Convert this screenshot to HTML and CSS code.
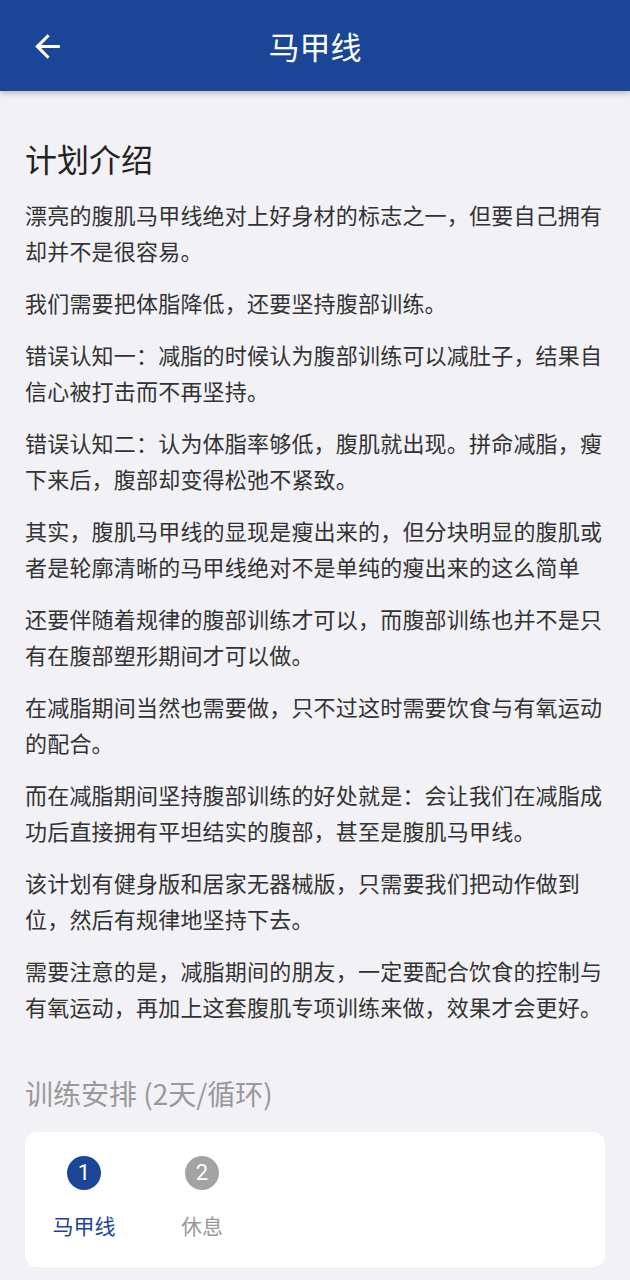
FILE: index.html
```html
<!DOCTYPE html>
<html lang="zh-CN">
<head>
<meta charset="utf-8">
<link rel="stylesheet" href="styles.css">
</head>
<body>
<header class="appbar">
  <button class="back" aria-label="返回">
    <svg viewBox="0 0 24 24" width="37" height="37"><path d="M20 11H7.83l5.59-5.59L12 4l-8 8 8 8 1.41-1.41L7.83 13H20v-2z" fill="#fff"/></svg>
  </button>
  <h1 class="title">马甲线</h1>
</header>
<main class="content">
  <h2 class="heading">计划介绍</h2>
  <p>漂亮的腹肌马甲线绝对上好身材的标志之一，但要自己拥有却并不是很容易。</p>
  <p>我们需要把体脂降低，还要坚持腹部训练。</p>
  <p>错误认知一：减脂的时候认为腹部训练可以减肚子，结果自信心被打击而不再坚持。</p>
  <p>错误认知二：认为体脂率够低，腹肌就出现。拼命减脂，瘦下来后，腹部却变得松弛不紧致。</p>
  <p>其实，腹肌马甲线的显现是瘦出来的，但分块明显的腹肌或者是轮廓清晰的马甲线绝对不是单纯的瘦出来的这么简单</p>
  <p>还要伴随着规律的腹部训练才可以，而腹部训练也并不是只有在腹部塑形期间才可以做。</p>
  <p>在减脂期间当然也需要做，只不过这时需要饮食与有氧运动的配合。</p>
  <p>而在减脂期间坚持腹部训练的好处就是：会让我们在减脂成功后直接拥有平坦结实的腹部，甚至是腹肌马甲线。</p>
  <p>该计划有健身版和居家无器械版，只需要我们把动作做到位，然后有规律地坚持下去。</p>
  <p>需要注意的是，减脂期间的朋友，一定要配合饮食的控制与有氧运动，再加上这套腹肌专项训练来做，效果才会更好。</p>
  <h3 class="subheading">训练安排 (2天/循环)</h3>
  <section class="card">
    <div class="day active">
      <span class="num">1</span>
      <span class="label">马甲线</span>
    </div>
    <div class="day">
      <span class="num">2</span>
      <span class="label">休息</span>
    </div>
  </section>
</main>
</body>
</html>
```
FILE: styles.css
```css
* { box-sizing: border-box; }
html, body { margin: 0; padding: 0; }
body {
  background: #f1f1f6;
  font-family: "Noto Sans CJK SC", "Noto Sans", sans-serif;
  color: #333;
  width: 630px;
}
.appbar {
  height: 91px;
  background: #1b4596;
  display: flex;
  align-items: center;
  justify-content: center;
  position: relative;
  box-shadow: 0 2px 6px rgba(0,0,0,0.25);
}
.back {
  position: absolute;
  left: 29px;
  top: 28px;
  width: 37px;
  height: 37px;
  padding: 0;
  border: 0;
  background: none;
  display: flex;
}
.title {
  margin: 0;
  color: #fff;
  font-size: 31px;
  font-weight: 400;
  line-height: 1;
}
.content {
  padding: 46px 25px 16px;
}
.heading {
  margin: 0 0 17px;
  font-size: 32px;
  font-weight: 400;
  line-height: 42px;
  color: #222;
}
.content p {
  margin: 0 0 16px;
  font-size: 22px;
  line-height: 36px;
  letter-spacing: 0.2px;
}
.subheading {
  margin: 50px 0 20px;
  font-size: 28px;
  font-weight: 400;
  line-height: 38px;
  color: #999;
}
.card {
  background: #fff;
  border-radius: 12px;
  height: 135px;
  display: flex;
  padding-top: 24px;
}
.day {
  width: 118px;
  display: flex;
  flex-direction: column;
  align-items: center;
  gap: 21px;
}
.num {
  width: 34px;
  height: 34px;
  border-radius: 50%;
  background: #a3a3a3;
  color: #fff;
  font-family: Roboto, "Noto Sans", sans-serif;
  font-size: 22px;
  line-height: 34px;
  text-align: center;
}
.label {
  font-size: 21px;
  line-height: 28px;
  color: #999;
}
.day.active .num { background: #1b4596; }
.day.active .label { color: #1b4596; }
```
